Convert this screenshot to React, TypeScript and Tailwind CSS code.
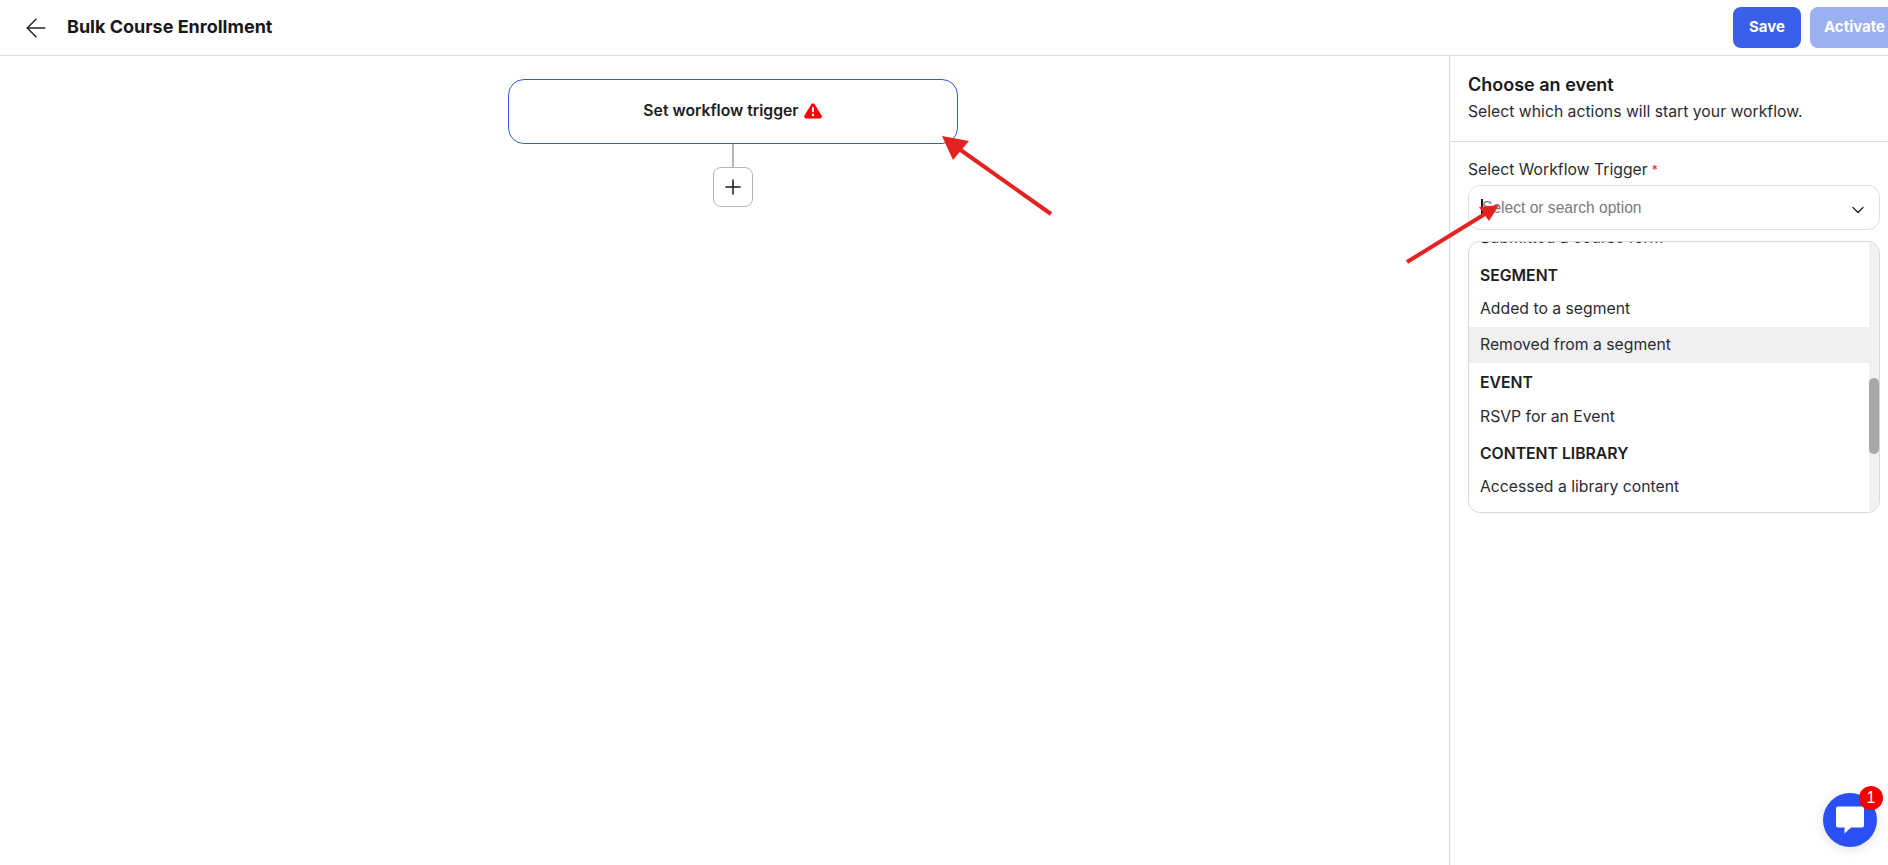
import { ArrowLeft, ChevronDown, Plus } from "lucide-react";

const font = "font-['Inter',sans-serif]";

function WarningIcon() {
  return (
    <svg width="18" height="16" viewBox="0 0 18 16" className="ml-[5px]">
      <path
        d="M9 2.4 L15.8 13.6 H2.2 Z"
        fill="#ff0000"
        stroke="#ff0000"
        strokeWidth="4"
        strokeLinejoin="round"
      />
      <rect x="8" y="4" width="2" height="5.5" rx="1" fill="#fff" />
      <circle cx="9" cy="12" r="1.2" fill="#fff" />
    </svg>
  );
}

function RedArrows() {
  return (
    <svg className="absolute inset-0 pointer-events-none" width="1888" height="865">
      <line x1="1051" y1="214" x2="955" y2="146" stroke="#e52222" strokeWidth="4" />
      <polygon points="942,136 969,141 953,160" fill="#e52222" />
      <line x1="1407" y1="262" x2="1485" y2="214" stroke="#e52222" strokeWidth="4" />
      <polygon points="1499,205 1479,207 1489,221" fill="#e52222" />
    </svg>
  );
}

function ChatWidget() {
  return (
    <div className="absolute left-[1823px] top-[793px] w-[54px] h-[54px] rounded-full bg-[#2a4ff5] flex items-center justify-center shadow-[0_2px_12px_rgba(0,0,0,0.12)]">
      <svg width="28" height="28" viewBox="0 0 28 28">
        <path
          d="M2 0.5 H26 a2 2 0 0 1 2 2 V19.5 a2 2 0 0 1 -2 2 H15 L8.5 27.5 V21.5 H2 a2 2 0 0 1 -2 -2 V2.5 a2 2 0 0 1 2 -2 Z"
          fill="#fff"
        />
      </svg>
      <span className="absolute left-[36px] top-[-7px] w-[24px] h-[24px] rounded-full bg-[#f50000] text-white text-[16px] font-medium flex items-center justify-center font-['Liberation_Sans',sans-serif]">
        1
      </span>
    </div>
  );
}

function GroupTitle({ label, className }: { label: string; className: string }) {
  return <div className={`px-[11px] text-[15.75px] leading-[20px] font-semibold text-[#1d1d22] ${className}`}>{label}</div>;
}

function Option({ label, active }: { label: string; active?: boolean }) {
  return (
    <div className={`h-[36px] pb-[1px] px-[11px] flex items-center text-[15.75px] text-[#2b2b33] ${active ? "bg-[#f0f0f0]" : ""}`}>
      {label}
    </div>
  );
}

export default function App() {
  return (
    <div className={`relative h-[865px] w-[1888px] overflow-hidden bg-white flex flex-col ${font}`}>
      <header className="h-[56px] shrink-0 border-b border-[#dcdcdc] flex items-center justify-between pl-[21px]">
        <div className="flex items-center">
          <ArrowLeft size={30} strokeWidth={1.2} className="text-[#26262b]" />
          <h1 className="ml-[16px] mb-[2px] text-[18px] font-bold text-[#18181b]">Bulk Course Enrollment</h1>
        </div>
        <div className="flex items-center gap-[9px] mr-[-11px] shrink-0">
          <button className="w-[68px] h-[41px] rounded-lg bg-[#3a5fe8] text-white text-[15px] font-bold">Save</button>
          <button className="w-[89px] h-[41px] rounded-lg bg-[#9bb0f0] text-white text-[15px] font-bold">Activate</button>
        </div>
      </header>

      <main className="flex-1 flex min-h-0">
        <section className="flex-1 flex flex-col items-center pt-[23px] pl-[16px]">
          <div className="w-[450px] h-[65px] pb-[2px] rounded-[16px] border border-[#2f5be8] flex items-center justify-center text-[15.75px] font-semibold text-[#1d1d22]">
            Set workflow trigger
            <WarningIcon />
          </div>
          <div className="w-[2px] h-[23px] bg-[#b4b4c0]" />
          <div className="w-[40px] h-[40px] rounded-lg border border-[#b4b4c0] flex items-center justify-center">
            <Plus size={24} strokeWidth={1.5} className="text-[#18181b]" />
          </div>
        </section>

        <aside className="w-[439px] shrink-0 border-l border-[#dcdcdc]">
          <div className="h-[86px] border-b border-[#dcdcdc] pl-[18px] pt-[17px]">
            <h2 className="text-[18px] leading-[24px] font-semibold text-[#18181b]">Choose an event</h2>
            <p className="mt-[5px] text-[15.75px] leading-[20px] text-[#2b2b33]">Select which actions will start your workflow.</p>
          </div>
          <div className="pl-[18px] pr-[8px] pt-[18px]">
            <label className="flex h-[20px] items-center gap-[4px] text-[15.75px] leading-[20px] text-[#2b2b33]">
              Select Workflow Trigger <span className="text-[12px] leading-none text-[#f50f0f]">*</span>
            </label>
            <div className="mt-[5px] h-[45px] rounded-xl border border-[#dedee4] flex items-center justify-between pl-[12px] pr-[11px]">
              <div className="flex items-center">
                <span className="w-[2px] h-[18px] bg-[#18181b] mr-[-1px]" />
                <span className="leading-[20px] text-[15.6px] text-[#7a7a85] font-['Liberation_Sans',sans-serif]">
                  Select or search option
                </span>
              </div>
              <ChevronDown size={20} strokeWidth={1.6} className="text-[#26262b] mt-[4px]" />
            </div>
            <div className="relative mt-[11px] h-[272px] rounded-xl border border-[#d6d6e0] overflow-hidden">
              <div className="mt-[-22px] pr-[10px]">
                <Option label="Submitted a course form" />
                <GroupTitle label="SEGMENT" className="mt-[10px] mb-[5px]" />
                <Option label="Added to a segment" />
                <Option label="Removed from a segment" active />
                <GroupTitle label="EVENT" className="mt-[10px] mb-[6px]" />
                <Option label="RSVP for an Event" />
                <GroupTitle label="CONTENT LIBRARY" className="mt-[9px] mb-[5px]" />
                <Option label="Accessed a library content" />
              </div>
              <div className="absolute right-0 top-0 bottom-0 w-[10px] bg-[#f1f1f1]">
                <div className="mt-[136px] h-[76px] rounded-full bg-[#a8a8a8]" />
              </div>
            </div>
          </div>
        </aside>
      </main>

      <RedArrows />
      <ChatWidget />
    </div>
  );
}
